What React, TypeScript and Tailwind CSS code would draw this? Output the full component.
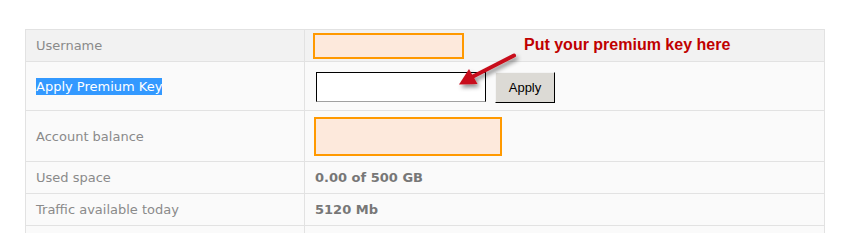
import React from "react";

const Row = ({ label, height, shade, children }: { label: React.ReactNode; height: string; shade?: boolean; children?: React.ReactNode }) => {
  return (
    <div className={`flex border-b border-[#e2e2e2] ${height} ${shade ? "bg-[#f2f2f2]" : "bg-[#fafafa]"}`}>
      <div className="w-[279px] shrink-0 border-r border-[#e2e2e2] pl-[10px] pt-px flex items-center text-[13px] text-[#8a8a8a]">
        {label}
      </div>
      <div className="flex-1 flex items-center pt-px">{children}</div>
    </div>
  );
};

const Arrow = () => (
  <svg width="80" height="50" viewBox="0 0 80 50" className="absolute left-[450px] top-[45px] pointer-events-none">
    <defs>
      <filter id="shadow" x="-30%" y="-30%" width="160%" height="180%">
        <feDropShadow dx="2" dy="3" stdDeviation="2" floodColor="#000" floodOpacity="0.45" />
      </filter>
    </defs>
    <g filter="url(#shadow)">
      <line x1="64" y1="10.5" x2="22" y2="32" stroke="#c8101a" strokeWidth="4" strokeLinecap="round" />
      <polygon points="9,39.5 19,24 27.5,39" fill="#c8101a" />
    </g>
  </svg>
);

export default function App() {
  return (
    <div className="relative w-[858px] h-[233px] overflow-hidden bg-white" style={{ fontFamily: '"DejaVu Sans", Verdana, sans-serif' }}>
      <div className="ml-[25px] mt-[29px] w-[800px] border-t border-l border-r border-[#e2e2e2]">
        <Row label="Username" height="h-[32px]" shade>
          <div className="ml-[8px] w-[151px] h-[26px] border-2 border-[#ff9900] bg-[#fde9dc]" />
        </Row>
        <Row
          label={<span className="bg-[#3399ff] text-white leading-[17px] inline-block">Apply Premium Key</span>}
          height="h-[49px]"
        >
          <div className="flex items-start self-start ml-[11px] gap-[9px] mt-[9px]">
            <div className="w-[170px] h-[30px] bg-white border border-black border-b-[#a0a0a0]" />
            <button
              className="w-[60px] h-[31px] bg-[#dcdad5] border border-t-[#f4f4f4] border-l-[#f4f4f4] border-r-black border-b-black text-[13px] text-black"
              style={{ fontFamily: '"Liberation Sans", Arial, sans-serif' }}
            >
              Apply
            </button>
          </div>
        </Row>
        <Row label="Account balance" height="h-[51px]">
          <div className="ml-[9px] w-[188px] h-[39px] border-2 border-[#ff9900] bg-[#fde9dc]" />
        </Row>
        <Row label="Used space" height="h-[32px]">
          <span className="ml-[10px] text-[13px] font-bold text-[#777777]">0.00 of 500 GB</span>
        </Row>
        <Row label="Traffic available today" height="h-[32px]">
          <span className="ml-[10px] text-[13px] font-bold text-[#777777]">5120 Mb</span>
        </Row>
        <Row label="" height="h-[32px]" />
      </div>
      <div
        className="absolute left-[524px] top-[35px] text-[16px] font-bold text-[#c00000] leading-[20px]"
        style={{ fontFamily: '"Liberation Sans", Arial, sans-serif' }}
      >
        Put your premium key here
      </div>
      <Arrow />
    </div>
  );
}
